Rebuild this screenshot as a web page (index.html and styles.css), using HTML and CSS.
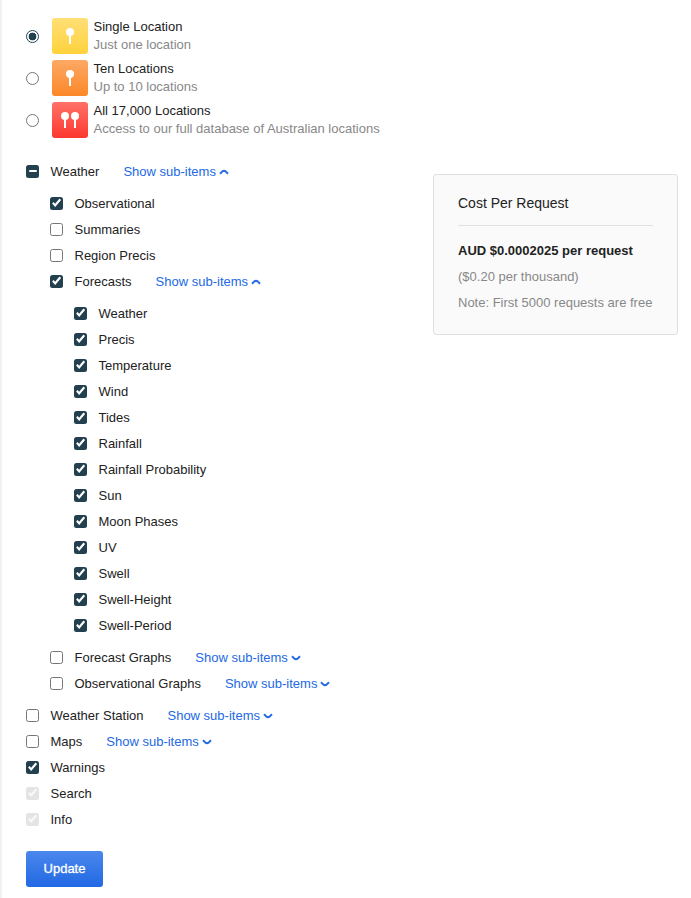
FILE: index.html
```html
<!DOCTYPE html>
<html lang="en">
<head>
<meta charset="utf-8">
<title>API Pricing</title>
<link rel="stylesheet" href="styles.css">
</head>
<body>
<svg width="0" height="0" class="defs">
  <symbol id="chevron" viewBox="0 0 10 6"><path d="M1 1.3 L3.4 3.6 Q5 4.8 6.6 3.6 L9 1.3" fill="none" stroke="currentColor" stroke-width="2"/></symbol>
</svg>
<form class="page">
  <div class="main">
    <div class="plans">
      <label class="plan">
        <input type="radio" name="plan" checked>
        <svg class="tile yellow" viewBox="0 0 36 36"><circle cx="18" cy="14" r="4"/><rect x="17" y="14" width="2" height="12"/></svg>
        <span class="plan-text"><span>Single Location</span><span class="muted">Just one location</span></span>
      </label>
      <label class="plan">
        <input type="radio" name="plan">
        <svg class="tile orange" viewBox="0 0 36 36"><circle cx="18" cy="14" r="4"/><rect x="17" y="14" width="2" height="12"/></svg>
        <span class="plan-text"><span>Ten Locations</span><span class="muted">Up to 10 locations</span></span>
      </label>
      <label class="plan">
        <input type="radio" name="plan">
        <svg class="tile red" viewBox="0 0 36 36"><circle cx="13" cy="14" r="4"/><rect x="12" y="14" width="2" height="12"/><circle cx="23" cy="14" r="4"/><rect x="22" y="14" width="2" height="12"/></svg>
        <span class="plan-text"><span>All 17,000 Locations</span><span class="muted">Access to our full database of Australian locations</span></span>
      </label>
    </div>
    <ul class="tree">
      <li>
        <div class="row"><label><input type="checkbox" id="weather"><span>Weather</span></label><a class="toggle"><span>Show sub-items</span><svg class="chev up"><use href="#chevron"/></svg></a></div>
        <ul>
          <li><div class="row"><label><input type="checkbox" checked><span>Observational</span></label></div></li>
          <li><div class="row"><label><input type="checkbox"><span>Summaries</span></label></div></li>
          <li><div class="row"><label><input type="checkbox"><span>Region Precis</span></label></div></li>
          <li>
            <div class="row"><label><input type="checkbox" checked><span>Forecasts</span></label><a class="toggle"><span>Show sub-items</span><svg class="chev up"><use href="#chevron"/></svg></a></div>
            <ul>
              <li><div class="row"><label><input type="checkbox" checked><span>Weather</span></label></div></li>
              <li><div class="row"><label><input type="checkbox" checked><span>Precis</span></label></div></li>
              <li><div class="row"><label><input type="checkbox" checked><span>Temperature</span></label></div></li>
              <li><div class="row"><label><input type="checkbox" checked><span>Wind</span></label></div></li>
              <li><div class="row"><label><input type="checkbox" checked><span>Tides</span></label></div></li>
              <li><div class="row"><label><input type="checkbox" checked><span>Rainfall</span></label></div></li>
              <li><div class="row"><label><input type="checkbox" checked><span>Rainfall Probability</span></label></div></li>
              <li><div class="row"><label><input type="checkbox" checked><span>Sun</span></label></div></li>
              <li><div class="row"><label><input type="checkbox" checked><span>Moon Phases</span></label></div></li>
              <li><div class="row"><label><input type="checkbox" checked><span>UV</span></label></div></li>
              <li><div class="row"><label><input type="checkbox" checked><span>Swell</span></label></div></li>
              <li><div class="row"><label><input type="checkbox" checked><span>Swell-Height</span></label></div></li>
              <li><div class="row"><label><input type="checkbox" checked><span>Swell-Period</span></label></div></li>
            </ul>
          </li>
          <li><div class="row"><label><input type="checkbox"><span>Forecast Graphs</span></label><a class="toggle"><span>Show sub-items</span><svg class="chev"><use href="#chevron"/></svg></a></div></li>
          <li><div class="row"><label><input type="checkbox"><span>Observational Graphs</span></label><a class="toggle"><span>Show sub-items</span><svg class="chev"><use href="#chevron"/></svg></a></div></li>
        </ul>
      </li>
      <li><div class="row"><label><input type="checkbox"><span>Weather Station</span></label><a class="toggle"><span>Show sub-items</span><svg class="chev"><use href="#chevron"/></svg></a></div></li>
      <li><div class="row"><label><input type="checkbox"><span>Maps</span></label><a class="toggle"><span>Show sub-items</span><svg class="chev"><use href="#chevron"/></svg></a></div></li>
      <li><div class="row"><label><input type="checkbox" checked><span>Warnings</span></label></div></li>
      <li><div class="row"><label><input type="checkbox" checked disabled><span>Search</span></label></div></li>
      <li><div class="row"><label><input type="checkbox" checked disabled><span>Info</span></label></div></li>
    </ul>
    <button type="button" class="update">Update</button>
  </div>
  <aside class="cost">
    <h2>Cost Per Request</h2>
    <p class="price">AUD $0.0002025 per request</p>
    <p class="muted">($0.20 per thousand)</p>
    <p class="muted">Note: First 5000 requests are free</p>
  </aside>
</form>
<script src="script.js"></script>
</body>
</html>
```
FILE: styles.css
```css
* { box-sizing: border-box; }

body {
  margin: 0;
  background: #fff;
  color: #222;
  font: 13px/18px "Liberation Sans", Arial, sans-serif;
}

.defs { position: absolute; }

.page {
  display: flex;
  justify-content: space-between;
  align-items: flex-start;
  height: 898px;
  padding: 18px 13px 0 24px;
  border-left: 2px solid #f0f0f5;
}

input {
  flex: none;
  display: grid;
  width: 13px;
  height: 13px;
  margin: 0;
  appearance: none;
  border: 1px solid #767676;
  border-radius: 2.5px;
  background: #fff;
}

input[type="radio"] { border-radius: 50%; }

input[type="radio"]:checked {
  border-color: #23404f;
  background: radial-gradient(circle, #23404f 3.6px, #fff 4.2px);
}

input[type="checkbox"]:checked,
input[type="checkbox"]:indeterminate {
  border: 0;
  background: #23404f;
}

input[type="checkbox"]:checked::before,
input[type="checkbox"]:indeterminate::before {
  content: "";
  background: #fff;
}

input[type="checkbox"]:checked::before {
  clip-path: polygon(2.1px 7px, 3.6px 5.6px, 5.1px 7.2px, 9.5px 2.1px, 11.1px 3.4px, 5.2px 10.4px);
}

input[type="checkbox"]:indeterminate::before {
  width: 8px;
  height: 2px;
  border-radius: 1px;
  place-self: center;
}

input[type="checkbox"]:disabled { background: #e4e4e4; }
input[type="checkbox"]:disabled::before { background: #f8f8f8; }

.plans {
  display: flex;
  flex-direction: column;
  gap: 6px;
}

.plan {
  display: flex;
  align-items: center;
}

.tile {
  width: 36px;
  height: 36px;
  margin: 0 5.5px 0 13px;
  border-radius: 3px;
  fill: #fff;
}

.yellow { background: linear-gradient(#ffdf76, #ffd23c); }
.orange { background: linear-gradient(#fca965, #fb8728); }
.red { background: linear-gradient(#ff7168, #fc382f); }

.plan-text {
  display: flex;
  flex-direction: column;
  white-space: nowrap;
}

.muted { color: #888; }

ul {
  margin: 0;
  padding: 6px 0 6px 24px;
  list-style: none;
}

.tree { padding: 20px 0 0; }

.row {
  display: flex;
  align-items: center;
  height: 26px;
  white-space: nowrap;
}

.row label {
  display: flex;
  align-items: center;
  gap: 11.5px;
}

.row span { padding-top: 1px; }

.toggle {
  display: flex;
  align-items: center;
  margin-left: 24px;
  color: #2269e3;
}

.chev {
  width: 10px;
  height: 6px;
  margin: 2px 0 0 3px;
}

.up { transform: rotate(180deg); }

.update {
  display: block;
  width: 77px;
  height: 36px;
  margin-top: 19px;
  padding: 0;
  border: 0;
  border-radius: 3px;
  background: linear-gradient(#4b88ec, #2168e4);
  color: #fff;
  font: 13px/18px "Liberation Sans", Arial, sans-serif;
  -webkit-text-stroke: 0.3px #fff;
}

.cost {
  width: 245px;
  height: 161px;
  margin-top: 156px;
  padding: 19px 24px 0;
  border: 1px solid #e0e0e0;
  border-radius: 3px;
  background: #fafafa;
  white-space: nowrap;
}

.cost h2 {
  margin: 0 0 16px;
  padding-bottom: 13px;
  border-bottom: 1px solid #e0e0e0;
  font-size: 14px;
  font-weight: 400;
}

.cost p { margin: 0 0 8px; }

.price { font-weight: 700; }
```
FILE: script.js
```js
document.getElementById("weather").indeterminate = true;
```
